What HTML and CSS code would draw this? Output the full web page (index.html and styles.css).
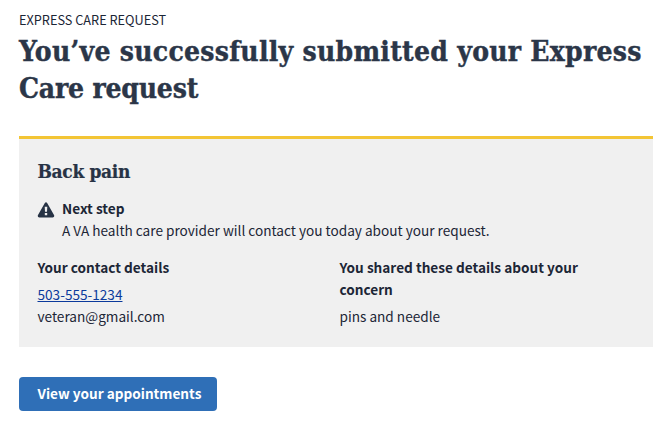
FILE: index.html
```html
<!DOCTYPE html>
<html lang="en">
<head>
<meta charset="utf-8">
<title>Express Care request</title>
<link rel="stylesheet" href="styles.css">
</head>
<body>
<main class="page">
  <div class="eyebrow">EXPRESS CARE REQUEST</div>
  <h1 class="title"><span class="title-lead">You’ve successfully submitted your Express</span><br>Care request</h1>
  <section class="card">
    <h2 class="card-title">Back pain</h2>
    <div class="next">
      <svg class="warn" viewBox="0 0 18 16" aria-hidden="true"><path fill="#273345" fill-rule="evenodd" d="M7.7 1.2Q9-.9 10.3 1.2L17 13Q17.9 15.2 15.7 15.4H2.3Q.1 15.2 1 13ZM7.7 4.7 8 9.8H10L10.3 4.7ZM7.8 11V13.2H10.2V11Z"/></svg>
      <div>
        <div class="label">Next step</div>
        <div>A VA health care provider will contact you today about your request.</div>
      </div>
    </div>
    <div class="columns">
      <div>
        <h3 class="label">Your contact details</h3>
        <div class="value"><a class="phone" href="#">503-555-1234</a><br>veteran@gmail.com</div>
      </div>
      <div>
        <h3 class="label">You shared these details about your<br>concern</h3>
        <div class="value">pins and needle</div>
      </div>
    </div>
  </section>
  <a class="button" href="#">View your appointments</a>
</main>
</body>
</html>
```
FILE: styles.css
```css
* { box-sizing: border-box; }
body {
  margin: 0;
  background: #fff;
  color: #1c2636;
  font: 13.62px/22px "Noto Sans CJK SC", "Open Sans", sans-serif;
}
h1, h2, h3 { margin: 0; }
.page { padding: 10px 19px 0; width: 672px; }
.eyebrow { font-size: 12.72px; line-height: 20px; }
.title {
  font: bold 28px/37px "DejaVu Serif Condensed", "DejaVu Serif", serif;
  font-stretch: condensed;
  letter-spacing: -0.2px;
  color: #2b3648;
  margin-top: 3px;
  white-space: nowrap;
  -webkit-text-stroke: 0.4px #2b3648;
}
.title-lead { letter-spacing: 0.27px; }
.card {
  width: 634px;
  height: 211px;
  margin-top: 29px;
  padding: 19px 19px 0 18.5px;
  background: #f0f0f0;
  border-top: 3px solid #f3c535;
}
.card-title {
  font: bold 19px/26px "DejaVu Serif Condensed", "DejaVu Serif", serif;
  font-stretch: condensed;
  letter-spacing: -0.35px;
  color: #273345;
  -webkit-text-stroke: 0.2px #273345;
}
.next { display: flex; margin-top: 13px; }
.warn { width: 18px; height: 16px; margin: 5px 7px 0 -0.5px; flex: none; }
.label { font-size: 13.62px; line-height: 22px; font-weight: bold; }
.columns { display: grid; grid-template-columns: 302px 260px; margin-top: 15px; }
.value { margin-top: 5px; }
.phone { color: #0b3a9c; }
.button {
  display: flex;
  align-items: center;
  width: 197.5px;
  height: 34px;
  margin-top: 30px;
  padding: 0 0 2px 18.5px;
  border-radius: 4px;
  background: #2f6fb7;
  color: #fff;
  font-weight: bold;
  text-decoration: none;
}
```
